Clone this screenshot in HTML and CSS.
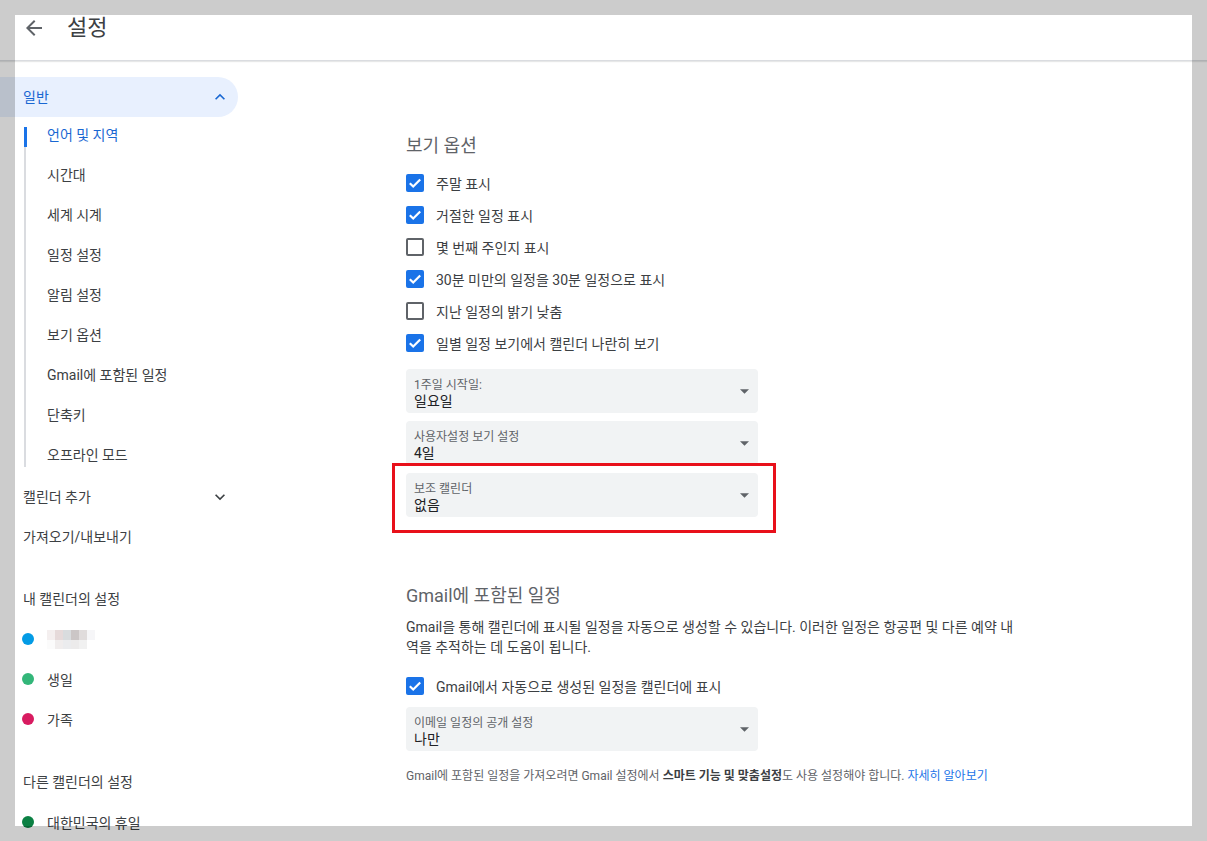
FILE: index.html
```html
<!DOCTYPE html>
<html lang="ko">
<head>
<meta charset="utf-8">
<title>설정</title>
<link rel="stylesheet" href="styles.css">
</head>
<body>
<div class="app">
  <header class="topbar">
    <span class="back" aria-label="뒤로">
      <svg width="24" height="24" viewBox="0 0 24 24"><path fill="#5f6368" d="M20 11H7.83l5.59-5.59L12 4l-8 8 8 8 1.41-1.41L7.83 13H20v-2z"/></svg>
    </span>
    <h1 class="title">설정</h1>
  </header>

  <div class="layout">
    <nav class="sidebar">
      <div class="nav-top active">
        <span>일반</span>
        <svg class="chev" width="20" height="20" viewBox="0 0 24 24"><path fill="#1967d2" d="M12 8l-6 6 1.41 1.41L12 10.83l4.59 4.58L18 14z"/></svg>
      </div>
      <ul class="subnav">
        <li class="active">언어 및 지역</li>
        <li>시간대</li>
        <li>세계 시계</li>
        <li>일정 설정</li>
        <li>알림 설정</li>
        <li>보기 옵션</li>
        <li>Gmail에 포함된 일정</li>
        <li>단축키</li>
        <li>오프라인 모드</li>
      </ul>
      <div class="nav-top">
        <span>캘린더 추가</span>
        <svg class="chev" width="20" height="20" viewBox="0 0 24 24"><path fill="#3c4043" d="M16.59 8.59L12 13.17 7.41 8.59 6 10l6 6 6-6z"/></svg>
      </div>
      <div class="nav-top">
        <span>가져오기/내보내기</span>
      </div>

      <div class="nav-section">내 캘린더의 설정</div>
      <div class="cal">
        <span class="dot dot-blue"></span>
        <span class="blurred">
          <i class="p1"></i><i class="p2"></i><i class="p3"></i><i class="p4"></i><i class="p5"></i><i class="p6"></i>
          <i class="p7"></i><i class="p8"></i><i class="p9"></i><i class="p10"></i><i class="p11"></i><i class="p12"></i>
        </span>
      </div>
      <div class="cal"><span class="dot dot-green"></span><span>생일</span></div>
      <div class="cal"><span class="dot dot-red"></span><span>가족</span></div>

      <div class="nav-section">다른 캘린더의 설정</div>
      <div class="cal"><span class="dot dot-dkgreen"></span><span>대한민국의 휴일</span></div>
    </nav>

    <main class="content">
      <section class="group">
        <h2 class="group-title">보기 옵션</h2>
        <div class="check-row"><span class="box on"><svg width="18" height="18" viewBox="0 0 18 18"><path d="M3.8 9.2l3.4 3.3 7-7" fill="none" stroke="#fff" stroke-width="2.2"/></svg></span><span>주말 표시</span></div>
        <div class="check-row"><span class="box on"><svg width="18" height="18" viewBox="0 0 18 18"><path d="M3.8 9.2l3.4 3.3 7-7" fill="none" stroke="#fff" stroke-width="2.2"/></svg></span><span>거절한 일정 표시</span></div>
        <div class="check-row"><span class="box"></span><span>몇 번째 주인지 표시</span></div>
        <div class="check-row"><span class="box on"><svg width="18" height="18" viewBox="0 0 18 18"><path d="M3.8 9.2l3.4 3.3 7-7" fill="none" stroke="#fff" stroke-width="2.2"/></svg></span><span>30분 미만의 일정을 30분 일정으로 표시</span></div>
        <div class="check-row"><span class="box"></span><span>지난 일정의 밝기 낮춤</span></div>
        <div class="check-row"><span class="box on"><svg width="18" height="18" viewBox="0 0 18 18"><path d="M3.8 9.2l3.4 3.3 7-7" fill="none" stroke="#fff" stroke-width="2.2"/></svg></span><span>일별 일정 보기에서 캘린더 나란히 보기</span></div>

        <div class="selects">
          <div class="select">
            <div class="select-text"><div class="select-label">1주일 시작일:</div><div class="select-value">일요일</div></div>
            <svg class="caret" width="9" height="5" viewBox="0 0 10 5"><path d="M0 0l5 5 5-5z" fill="#5f6368"/></svg>
          </div>
          <div class="select">
            <div class="select-text"><div class="select-label">사용자설정 보기 설정</div><div class="select-value">4일</div></div>
            <svg class="caret" width="9" height="5" viewBox="0 0 10 5"><path d="M0 0l5 5 5-5z" fill="#5f6368"/></svg>
          </div>
          <div class="select">
            <div class="select-text"><div class="select-label">보조 캘린더</div><div class="select-value">없음</div></div>
            <svg class="caret" width="9" height="5" viewBox="0 0 10 5"><path d="M0 0l5 5 5-5z" fill="#5f6368"/></svg>
          </div>
        </div>
      </section>

      <section class="group group-gmail">
        <h2 class="group-title">Gmail에 포함된 일정</h2>
        <p class="desc">Gmail을 통해 캘린더에 표시될 일정을 자동으로 생성할 수 있습니다. 이러한 일정은 항공편 및 다른 예약 내역을 추적하는 데 도움이 됩니다.</p>
        <div class="check-row check-gmail"><span class="box on"><svg width="18" height="18" viewBox="0 0 18 18"><path d="M3.8 9.2l3.4 3.3 7-7" fill="none" stroke="#fff" stroke-width="2.2"/></svg></span><span>Gmail에서 자동으로 생성된 일정을 캘린더에 표시</span></div>
        <div class="select select-gmail">
          <div class="select-text"><div class="select-label">이메일 일정의 공개 설정</div><div class="select-value">나만</div></div>
          <svg class="caret" width="9" height="5" viewBox="0 0 10 5"><path d="M0 0l5 5 5-5z" fill="#5f6368"/></svg>
        </div>
        <p class="note">Gmail에 포함된 일정을 가져오려면 Gmail 설정에서 <b>스마트 기능 및 맞춤설정</b>도 사용 설정해야 합니다. <a href="#">자세히 알아보기</a></p>
      </section>
    </main>
  </div>

  <div class="highlight"></div>

  <div class="frame frame-top"></div>
  <div class="frame frame-left"></div>
  <div class="frame frame-right"></div>
  <div class="frame frame-bottom"></div>
</div>
</body>
</html>
```

FILE: styles.css
```css
* { box-sizing: border-box; }

html, body {
  margin: 0;
  padding: 0;
  background: #fff;
}

body {
  font-family: Roboto, "Noto Sans CJK KR", sans-serif;
  color: #3c4043;
  font-size: 14px;
}

.app {
  position: relative;
  width: 1207px;
  height: 841px;
  overflow: hidden;
  background: #fff;
}

/* header */
.topbar {
  height: 61px;
  display: flex;
  align-items: flex-start;
  padding: 16px 0 0 22px;
  border-bottom: 1px solid #dadce0;
  box-shadow: 0 1px 1px rgba(60, 64, 67, 0.12);
}

.back {
  width: 24px;
  height: 24px;
  display: flex;
}

.title {
  margin: 0 0 0 21px;
  font-size: 22px;
  font-weight: 400;
  line-height: 24px;
  color: #3c4043;
}

/* layout */
.layout {
  display: flex;
}

.sidebar {
  width: 256px;
  flex: none;
  padding-top: 16px;
}

.nav-top {
  width: 238px;
  height: 40px;
  display: flex;
  align-items: center;
  justify-content: space-between;
  padding: 0 8px 3px 23px;
  border-radius: 0 20px 20px 0;
  font-size: 14px;
  color: #3c4043;
}

.nav-top.active {
  background: #e8f0fe;
  color: #1967d2;
}

.chev { display: block; margin-top: 3px; }

.subnav {
  list-style: none;
  margin: 0 0 0 24px;
  padding: 0;
  position: relative;
}

.subnav::before {
  content: "";
  position: absolute;
  left: 0;
  top: 10px;
  bottom: 10px;
  width: 2px;
  background: #dadce0;
}

.subnav li {
  position: relative;
  height: 40px;
  line-height: 36px;
  padding: 0 0 4px 23px;
  color: #3c4043;
}

.subnav li.active {
  color: #1967d2;
}

.subnav li.active::before {
  content: "";
  position: absolute;
  left: 0;
  top: 10px;
  width: 3px;
  height: 20px;
  background: #1a73e8;
}

.nav-section {
  margin-top: 23px;
  height: 40px;
  line-height: 38px;
  padding: 0 0 2px 23px;
  color: #3c4043;
}

.cal {
  height: 40px;
  display: flex;
  align-items: center;
  padding: 0 0 2px 22px;
  gap: 13px;
  color: #3c4043;
}

.dot {
  width: 12px;
  height: 12px;
  border-radius: 50%;
  flex: none;
}
.dot-blue { background: #039be5; }
.dot-green { background: #33b679; }
.dot-red { background: #d81b60; }
.dot-dkgreen { background: #0b8043; }

.blurred {
  display: grid;
  grid-template-columns: repeat(6, 8px);
  grid-template-rows: 10px 9px;
  margin-top: 1px;
  filter: blur(0.6px);
}
.blurred i { display: block; }
.p1 { background: #f4efef; }
.p2 { background: #e6dada; }
.p3 { background: #d9dcde; }
.p4 { background: #cbc6c6; }
.p5 { background: #e0dcdc; }
.p6 { background: #f6f6f8; }
.p7 { background: #fbfbfb; }
.p8 { background: #f0eded; }
.p9 { background: #ebecee; }
.p10 { background: #ecebeb; }
.p11 { background: #f1f1f1; }
.p12 { background: #ffffff; }

/* content */
.content {
  flex: 1;
  padding: 73px 0 0 150px;
}

.group-title {
  margin: 0;
  font-size: 18px;
  font-weight: 400;
  line-height: 24px;
  color: #5f6368;
}

.group > .group-title + .check-row { margin-top: 9px; }

.check-row {
  height: 32px;
  display: flex;
  align-items: center;
  gap: 12px;
  font-size: 14px;
  color: #3c4043;
}

.box {
  width: 18px;
  height: 18px;
  border: 2px solid #5f6368;
  border-radius: 2px;
  flex: none;
  display: flex;
}

.box.on {
  border: none;
  background: #1a73e8;
}

.selects {
  margin-top: 10px;
  display: flex;
  flex-direction: column;
  gap: 8px;
}

.select {
  width: 352px;
  height: 44px;
  background: #f1f3f4;
  border-radius: 4px;
  display: flex;
  align-items: center;
  justify-content: space-between;
  padding: 0 9px 0 8px;
}

.select-text {
  padding-top: 4px;
}

.select-label {
  font-size: 12px;
  line-height: 16px;
  color: #5f6368;
}

.select-value {
  font-size: 14px;
  line-height: 16px;
  color: #202124;
  font-weight: 400;
}

.caret { display: block; }

.group-gmail {
  margin-top: 67px;
}

.desc {
  margin: 9px 0 0;
  width: 612px;
  font-size: 14px;
  line-height: 20px;
  color: #3c4043;
  word-break: break-all;
}

.check-gmail { margin-top: 13px; }

.select-gmail { margin-top: 5px; }

.note {
  margin: 17px 0 0;
  font-size: 12px;
  line-height: 16px;
  color: #5f6368;
}

.note b {
  font-weight: 700;
  color: #3c4043;
}

.note a {
  color: #1a73e8;
  text-decoration: none;
}

/* annotation box drawn over the screenshot */
.highlight {
  position: absolute;
  left: 392px;
  top: 463px;
  width: 384px;
  height: 70px;
  border: 3px solid #e8101a;
}

/* grey frame around the capture */
.frame {
  position: absolute;
  background: rgba(0, 0, 0, 0.2);
}
.frame-top { left: 0; top: 0; width: 1207px; height: 15px; }
.frame-bottom { left: 0; top: 826px; width: 1207px; height: 15px; }
.frame-left { left: 0; top: 15px; width: 15px; height: 811px; }
.frame-right { left: 1192px; top: 15px; width: 15px; height: 811px; }
```
